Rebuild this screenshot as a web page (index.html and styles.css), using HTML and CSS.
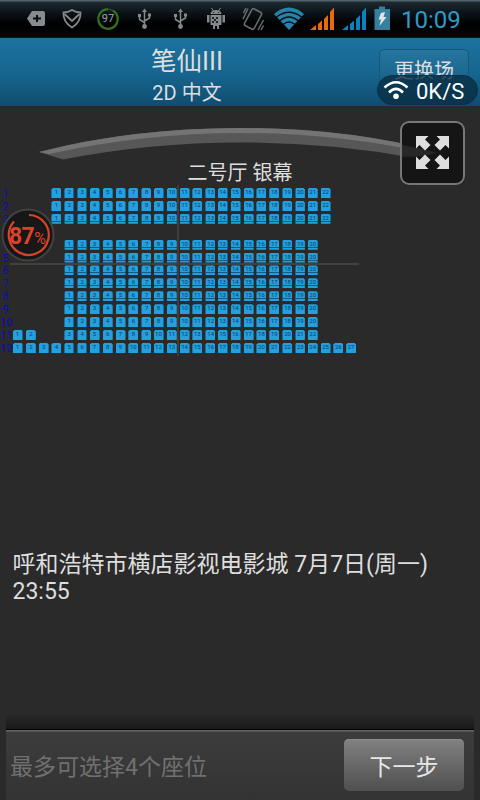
FILE: index.html
```html
<!DOCTYPE html>
<html lang="zh-CN">
<head>
<meta charset="utf-8">
<title>笔仙III</title>
<link rel="stylesheet" href="styles.css">
</head>
<body>
<div class="phone">
  <div class="status">
    <svg class="tray" width="480" height="38" viewBox="0 0 480 38">
      <path fill="#888b8d" d="M32 11H43Q45 11 45 13V24Q45 26 43 26H32L27 18.5Z"/>
      <path stroke="#0a0f13" stroke-width="2" d="M33 18.5H41M37 15V22"/>
      <g fill="none" stroke="#85898b" stroke-width="1.8">
        <path d="M72 10Q76 12.5 80.500 12.500Q81 22 72 27.500Q63 22 63.500 12.500Q68 12.500 72 10Z"/>
        <path d="M64.500 14L72 21L79.500 14"/>
      </g>
      <circle cx="108" cy="19" r="9.800" fill="none" stroke="#2b3c2b" stroke-width="2"/>
      <circle cx="108" cy="19" r="9.800" fill="none" stroke="#337515" stroke-width="2" stroke-dasharray="56 6" transform="rotate(-60 108 19)"/>
      <g id="usb" fill="none" stroke="#85898b" stroke-width="1.500">
        <path d="M144.500 11V26M139.500 16V19.500L144.500 22.500M149.500 15V18L144.500 21"/>
        <path fill="#85898b" stroke="none" d="M144.500 8.500L147 12H142ZM138 14H141V17H138ZM148 13.500H151V16.500H148Z"/>
        <circle cx="144.500" cy="26.500" r="2.400" fill="#85898b" stroke="none"/>
      </g>
      <use href="#usb" x="36"/>
      <g fill="#85898b">
        <path d="M210.500 14Q211 10 216 10T221.500 14ZM210.500 15H221.500V25H219V29H217V26H215V29H213V25H210.500ZM207 15H209.500V22.500H207ZM222.500 15H225V22.500H222.500Z"/>
        <path stroke="#85898b" d="M211.500 8L213.500 11M220.500 8L218.500 11"/>
        <path fill="#20262a" d="M213 12H214.200V13H213ZM218 12H219.200V13H218ZM212 17H214V19H212ZM216 17H218V19H216ZM214 19H216V21H214ZM212 21H214V23H212ZM216 21H218V23H216Z"/>
      </g>
      <g fill="none" stroke="#696d70" stroke-width="1.500">
        <rect x="247.500" y="9.500" width="11" height="19" rx="2" transform="rotate(28 253 19)"/>
        <path d="M243 19L248 8.500M243.500 13L246 8M258 30L263.500 20M261 30L263.500 25.500"/>
      </g>
      <path fill="#2683aa" d="M289 30L274 14Q281 7.500 289 7.500T304 14Z"/>
      <g fill="none" stroke="#061018" stroke-width="1.300">
        <path d="M276.500 17Q289 7.500 301.500 17M279.500 21Q289 13 298.500 21M283 24.500Q289 19.500 295 24.500"/>
      </g>
      <path fill="#e56a12" d="M310 30L316 25V30ZM318 24L322 20.500V30H318ZM324 19L328 15V30H324ZM330 12L334 7.500V30H330Z"/>
      <path fill="#0a82c2" d="M342 30L348 25V30ZM350 24L354 20.500V30H350ZM356 19L360 15V30H356ZM362 12L366 7.500V30H362Z"/>
      <path fill="#34809e" d="M379 6.500H385V9H390V30H374.500V9H379Z"/>
      <path fill="#e0e5e8" d="M381 13L385 12L383.500 17H386.500L379.500 26L381 19.500H378.500Z"/>
    </svg>
    <span class="temp">97</span>
    <span class="clock">10:09</span>
  </div>

  <header class="header">
    <div class="titles">
      <h1>笔仙III</h1>
      <p>2D 中文</p>
    </div>
    <button class="change">更换场</button>
  </header>

  <main class="hall">
    <div class="screen">
      <svg width="480" height="54" viewBox="0 106 480 54">
        <path fill="#575757" d="M39 152Q132 128 240 128T438 152L414 158Q330 142.500 240 142.500T63 159.500Z"/>
        <path fill="#747474" d="M39 152Q132 128 240 128T438 152L431 153.500Q335 133 240 133T49 154Z"/>
      </svg>
      <p>二号厅 银幕</p>
    </div>
    <div class="map">
      <div class="rows" id="rows"></div>
      <i class="axis-x"></i><i class="axis-y"></i>
    </div>
    <p class="info">呼和浩特市横店影视电影城 7月7日(周一) 23:55</p>
  </main>

  <footer class="footer">
    <span>最多可选择4个座位</span>
    <button class="next">下一步</button>
  </footer>

  <div class="speed">
    <svg width="26" height="20" viewBox="0 0 26 20" fill="none" stroke="#fff" stroke-width="2.600">
      <path d="M1.500 7.500Q13 -3 24.500 7.500M6 12.500Q13 5.500 20 12.500"/>
      <circle cx="13" cy="16.300" r="2.800" fill="#fff" stroke="none"/>
    </svg>
    <span>0K/S</span>
  </div>

  <div class="expand">
    <svg width="65" height="64" viewBox="0 0 65 64">
      <path fill="#282828" d="M2 24Q22 27 36 32Q24 36 2 36Z"/>
      <g fill="#dedede">
        <path id="arrow" d="M16 15H28.500L25 18.500L30.500 24L25 29.500L19.500 24L16 27.500Z"/>
        <use href="#arrow" transform="matrix(-1 0 0 1 65 0)"/>
        <use href="#arrow" transform="matrix(1 0 0 -1 0 63)"/>
        <use href="#arrow" transform="matrix(-1 0 0 -1 65 63)"/>
      </g>
    </svg>
  </div>

  <div class="meter">
    <svg width="54" height="54" viewBox="0 0 54 54">
      <circle cx="27" cy="27" r="25.500" fill="#171717" stroke="#42423f" stroke-width="2"/>
      <path fill="none" stroke="#dc4229" stroke-width="2.200" d="M28 7A20 20 0 1 1 13 13.500"/>
    </svg>
    <span>87<small>%</small></span>
  </div>
</div>
<script src="seats.js"></script>
</body>
</html>
```
FILE: styles.css
```css
* { box-sizing: border-box; margin: 0; padding: 0; }
body {
  width: 480px;
  height: 800px;
  overflow: hidden;
  background: #2a2a2a;
  font-family: Roboto, "Noto Sans CJK SC", sans-serif;
  color: #dedede;
}
button { font: inherit; color: inherit; border: 0; }
.phone { position: relative; height: 800px; display: flex; flex-direction: column; }

.status {
  position: relative;
  height: 38px;
  background: linear-gradient(#53636c 0 1px, #1d2a31 2px, #0a1116 14px, #000 24px, #030506 36px, #101c22 38px);
}
.tray { display: block; }
.temp {
  position: absolute; left: 97px; top: 12px; width: 22px;
  text-align: center; font-size: 11px; line-height: 14px; color: #a0a4a6;
}
.clock {
  position: absolute; left: 401px; top: 4px;
  font-size: 24px; line-height: 32px; color: #2e9bc7; white-space: nowrap;
}

.header {
  height: 68px;
  display: flex;
  justify-content: space-between;
  padding: 0 11px 0 147px;
  background: linear-gradient(#1c729f, #176690 50%, #0f4d6f);
}
.titles { width: 80px; text-align: center; white-space: nowrap; }
h1 { font-size: 25.500px; font-weight: 400; line-height: 30px; margin-top: 8px; }
.titles p { font-size: 20px; line-height: 24px; margin-top: 5px; }
.change {
  width: 90px; height: 43px; margin-top: 11px;
  border: 1px solid #155779; border-radius: 5px;
  background: linear-gradient(#2676a0, #145c82);
  font-size: 20px; line-height: 43px;
}

.hall { height: 623px; display: flex; flex-direction: column; }
.screen { height: 79px; }
.screen svg { display: block; }
.screen p { padding-top: 1px; text-align: center; font-size: 20px; line-height: 24px; }
.map { position: relative; height: 180px; padding-top: 3px; }
.rows { display: grid; grid-template-rows: repeat(13, 12.920px); }
.row { display: grid; grid-template-columns: 13px repeat(27, 12.820px); }
.label { width: 11px; text-align: center; font-size: 11px; line-height: 11px; color: #0909c4; }
.seat {
  width: 10px; height: 10px;
  background: #22a0df;
  text-align: center;
  font-size: 6px; line-height: 8px; color: #063f63;
  clip-path: polygon(1px 0, 9px 0, 9px 1px, 10px 1px, 10px 10px, 0 10px, 0 1px, 1px 1px);
}
.seat.left { border-left: 1px solid #12689a; }
.seat.right { border-right: 1px solid #12689a; }
.seat.base { background: linear-gradient(#22a0df 7px, #105b86 7px 8px, #22a0df 8px); }
.axis-x { position: absolute; left: 10px; top: 78px; width: 349px; height: 2px; background: #414141; }
.axis-y { position: absolute; left: 177px; top: 0; width: 2px; height: 171px; background: #3d3d3d; }
.info { margin: 186px 40px 0 12.500px; font-size: 23px; line-height: 27px; }

.footer {
  position: relative;
  height: 71px;
  margin: 0 6px;
  border-top: 1px solid #000;
  background: linear-gradient(#656565 0 1px, #3c3c3c 2px, #333);
  display: flex;
  justify-content: space-between;
  padding: 9px 10px 0 4px;
  color: #707070;
  font-size: 23px;
}
.footer::before {
  content: ""; position: absolute; left: 0; right: 0; top: -16px; height: 15px;
  background: linear-gradient(#2a2a2a, #191919);
}
.footer span { line-height: 57px; }
.next {
  width: 120px; height: 52px;
  border-radius: 5px;
  background: linear-gradient(#818181, #4f4f4f);
  box-shadow: inset 0 1px #8d8d8d;
  color: #e8e8e8;
  line-height: 58px;
}

.speed {
  position: absolute; left: 377px; top: 75px; width: 101px; height: 30px;
  border: 1px solid #09304a; border-radius: 15px;
  background: rgba(9, 46, 68, .8);
  display: flex; align-items: center; gap: 7px; padding-left: 5px;
  color: #fff; font-size: 22px; white-space: nowrap;
}
.speed span { line-height: 30px; padding-top: 4px; }
.expand {
  position: absolute; left: 400px; top: 121px; width: 65px; height: 64px;
  border-radius: 9px; background: #151515;
  box-shadow: inset 0 0 0 2px #777;
}
.expand svg { display: block; }
.meter { position: absolute; left: 1px; top: 208px; width: 54px; height: 54px; }
.meter svg { display: block; }
.meter span {
  position: absolute; left: 8px; top: 15px;
  font-size: 23px; line-height: 27px; font-weight: 700; color: #dc4229; white-space: nowrap; letter-spacing: -.6px;
}
.meter small { font-size: 16px; font-weight: 400; }
```
FILE: seats.js
```js
// Each entry lists [first column, seat count] blocks; null is an aisle.
const front = [[3, 22]];
const middle = [[4, 20]];
const layout = [
  front, front, front, null,
  middle, middle, middle, middle, middle, middle, middle,
  [[0, 2], [4, 20]],
  [[0, 27]]
];
const leftEdge = [4, 5, 10, 15, 21, 22];
const rightEdge = [0, 4, 5, 6, 11, 16, 17];
const container = document.getElementById('rows');
let rowNumber = 0;

layout.forEach(blocks => {
  const row = document.createElement('div');
  row.className = 'row';
  container.append(row);
  if (!blocks) return;
  rowNumber++;
  const label = document.createElement('span');
  label.className = 'label';
  label.textContent = rowNumber;
  row.append(label);
  let seatNumber = 0;
  blocks.forEach(([start, count]) => {
    for (let col = start; col < start + count; col++) {
      const seat = document.createElement('span');
      seat.className = 'seat';
      if (leftEdge.includes(col)) seat.classList.add('left');
      if (rightEdge.includes(col)) seat.classList.add('right');
      if (rowNumber >= 3 && rowNumber <= 8) seat.classList.add('base');
      seat.style.gridColumn = col + 2;
      seat.textContent = ++seatNumber;
      row.append(seat);
    }
  });
});
```
